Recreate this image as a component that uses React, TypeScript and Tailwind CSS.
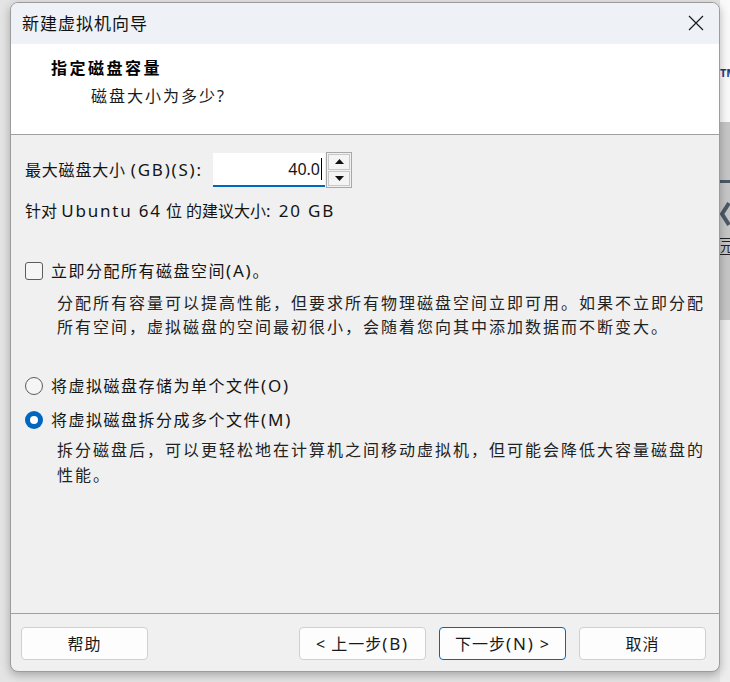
import React from "react";

function L({ children }: { children: React.ReactNode }) {
  return <span className="text-[17px] tracking-[1.8px]">{children}</span>;
}

function Btn({ children, primary }: { children: React.ReactNode; primary?: boolean }) {
  return (
    <div
      className={
        primary
          ? "w-[127px] h-[33px] rounded-[4px] border border-[#0067c0] bg-[#fdfdfd] flex items-center justify-center text-[16px] tracking-[1px] text-[#1a1a1a] whitespace-nowrap"
          : "w-[127px] h-[33px] rounded-[4px] border border-[#d0d0d0] bg-[#fdfdfd] flex items-center justify-center text-[16px] tracking-[1px] text-[#1a1a1a] whitespace-nowrap"
      }
    >
      {children}
    </div>
  );
}

export default function App() {
  return (
    <div className="w-[730px] h-[682px] bg-[#e4e4e4] flex items-start overflow-hidden font-['Noto_Sans','Noto_Sans_CJK_SC',sans-serif] text-[#141414]">
      <div className="w-[10px] shrink-0" />
      {/* Dialog window */}
      <div className="mt-[2px] w-[710px] h-[670px] shrink-0 flex flex-col rounded-[8px] border border-[#9c9c9c] bg-[#f0f0f0] overflow-hidden shadow-[0_3px_10px_rgba(0,0,0,0.28)] relative z-10">
        {/* Title bar */}
        <div className="h-[41px] shrink-0 bg-[#eef2f7] flex items-center justify-between pl-[11px] pr-[15px]">
          <span className="text-[17px] tracking-[1px] leading-[24px] text-[#111]">新建虚拟机向导</span>
          <svg width="16" height="16" viewBox="0 0 16 16" className="mt-[-1px]">
            <path d="M1 1 L15 15 M15 1 L1 15" stroke="#1a1a1a" strokeWidth="1.2" fill="none" />
          </svg>
        </div>
        {/* Header */}
        <div className="h-[91px] shrink-0 bg-white border-b border-[#a0a0a0] pt-[12px] pl-[40px] flex flex-col">
          <div className="text-[16px] font-bold tracking-[2.5px] leading-[24px] text-[#000]">指定磁盘容量</div>
          <div className="mt-[4px] ml-[40px] text-[16px] tracking-[2px] leading-[24px] text-[#1a1a1a]">磁盘大小为多少?</div>
        </div>
        {/* Body */}
        <div className="flex-1 pl-[14px] pt-[18px] flex flex-col">
          <div className="flex items-center h-[34px]">
            <div className="w-[188px] text-[16px] leading-[24px] tracking-[0.8px] whitespace-nowrap">
              最大磁盘大小 <L>(GB)(S):</L>
            </div>
            <div className="w-[112px] h-[34px] bg-white border-b-2 border-[#0067c0] flex items-center justify-end pr-[3px]">
              <span className="text-[16px] leading-[24px]">40.0</span>
              <span className="w-[1px] h-[22px] bg-black ml-[1px]" />
            </div>
            <div className="ml-[1px] w-[26px] h-[36px] border border-[#a8a8a8] flex flex-col p-[1px] gap-[1px] bg-[#f0f0f0]">
              <div className="flex-1 border border-[#c8c8c8] bg-[#f4f4f4] flex items-center justify-center">
                <svg width="9" height="5" viewBox="0 0 9 5"><path d="M0 5 L4.5 0 L9 5 Z" fill="#111" /></svg>
              </div>
              <div className="flex-1 border border-[#c8c8c8] bg-[#f4f4f4] flex items-center justify-center">
                <svg width="9" height="5" viewBox="0 0 9 5"><path d="M0 0 L4.5 5 L9 0 Z" fill="#111" /></svg>
              </div>
            </div>
          </div>
          <div className="mt-[13px] h-[22px] flex items-center text-[16px] leading-[22px] whitespace-nowrap">
            针对&nbsp;<L>Ubuntu 64</L>&nbsp;位 的建议大小<L>: 20 GB</L>
          </div>
          {/* Checkbox */}
          <div className="mt-[38px] h-[22px] flex items-center">
            <div className="w-[18px] h-[18px] rounded-[3px] border border-[#5c5c5c] bg-[#f5f5f5]" />
            <span className="ml-[8px] text-[16px] tracking-[1.5px] leading-[22px]">
              立即分配所有磁盘空间<L>(A)</L>。
            </span>
          </div>
          <div className="mt-[9px] ml-[32px] text-[16px] tracking-[2px] leading-[24px] text-[#222] whitespace-nowrap">
            <div>分配所有容量可以提高性能，但要求所有物理磁盘空间立即可用。如果不立即分配</div>
            <div>所有空间，虚拟磁盘的空间最初很小，会随着您向其中添加数据而不断变大。</div>
          </div>
          {/* Radios */}
          <div className="mt-[36px] h-[22px] flex items-center">
            <div className="w-[18px] h-[18px] rounded-full border border-[#5c5c5c] bg-[#f5f5f5]" />
            <span className="ml-[8px] text-[16px] tracking-[1.5px] leading-[22px]">
              将虚拟磁盘存储为单个文件<L>(O)</L>
            </span>
          </div>
          <div className="mt-[12px] h-[22px] flex items-center">
            <div className="w-[18px] h-[18px] rounded-full bg-[#0067c0] flex items-center justify-center">
              <div className="w-[8px] h-[8px] rounded-full bg-white" />
            </div>
            <span className="ml-[8px] text-[16px] tracking-[1.5px] leading-[22px]">
              将虚拟磁盘拆分成多个文件<L>(M)</L>
            </span>
          </div>
          <div className="mt-[7px] ml-[32px] text-[16px] tracking-[2px] leading-[25px] text-[#222] whitespace-nowrap">
            <div>拆分磁盘后，可以更轻松地在计算机之间移动虚拟机，但可能会降低大容量磁盘的</div>
            <div>性能。</div>
          </div>
        </div>
        {/* Footer */}
        <div className="h-[58px] shrink-0 border-t border-[#a0a0a0] flex pl-[10px] pr-[13px] pt-[13px]">
          <Btn>帮助</Btn>
          <div className="flex-1" />
          <Btn>&lt;&nbsp;上一步<L>(B)</L></Btn>
          <div className="w-[13px]" />
          <Btn primary>下一步<L>(N)</L>&nbsp;&gt;</Btn>
          <div className="w-[13px]" />
          <Btn>取消</Btn>
        </div>
      </div>
      {/* Background window strip */}
      <div className="w-[10px] h-[682px] shrink-0 flex flex-col overflow-hidden">
        <div className="h-[122px] bg-[#fafafa] pt-[66px] overflow-hidden">
          <span className="block text-[11px] font-bold leading-[14px] text-[#1f3a80] whitespace-nowrap">TM</span>
        </div>
        <div className="h-[198px] bg-[#c6c6c6] flex flex-col overflow-hidden">
          <div className="mt-[58px] h-[3px] bg-[#4b5866]" />
          <svg width="10" height="30" viewBox="0 0 10 30" className="mt-[16px]">
            <path d="M9 4 L2 15 L9 26" stroke="#4b5866" strokeWidth="4" fill="none" />
          </svg>
          <div className="mt-[9px] h-[17px] border-y border-[#222] text-[13px] leading-[15px] text-[#222] whitespace-nowrap overflow-hidden">元</div>
        </div>
        <div className="flex-1 bg-[#ededed]" />
      </div>
    </div>
  );
}
